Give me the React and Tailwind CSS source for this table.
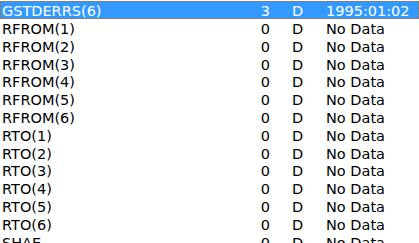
const rows = [
  { name: "GSTDERRS(5)", count: "3", flag: "D", value: "1995:01:02" },
  { name: "GSTDERRS(6)", count: "3", flag: "D", value: "1995:01:02", selected: true },
  { name: "RFROM(1)", count: "0", flag: "D", value: "No Data" },
  { name: "RFROM(2)", count: "0", flag: "D", value: "No Data" },
  { name: "RFROM(3)", count: "0", flag: "D", value: "No Data" },
  { name: "RFROM(4)", count: "0", flag: "D", value: "No Data" },
  { name: "RFROM(5)", count: "0", flag: "D", value: "No Data" },
  { name: "RFROM(6)", count: "0", flag: "D", value: "No Data" },
  { name: "RTO(1)", count: "0", flag: "D", value: "No Data" },
  { name: "RTO(2)", count: "0", flag: "D", value: "No Data" },
  { name: "RTO(3)", count: "0", flag: "D", value: "No Data" },
  { name: "RTO(4)", count: "0", flag: "D", value: "No Data" },
  { name: "RTO(5)", count: "0", flag: "D", value: "No Data" },
  { name: "RTO(6)", count: "0", flag: "D", value: "No Data" },
  { name: "SHAE", count: "0", flag: "D", value: "No Data" },
  { name: "SHAE(2)", count: "0", flag: "D", value: "No Data" },
];

function Row({ row }) {
  return (
    <div
      className={`box-border flex h-[17.8px] whitespace-nowrap pt-[2px] leading-[15.8px] ${
        row.selected
          ? "border border-dotted border-[#cc6600] bg-[#3399ff] text-white"
          : "border border-transparent text-black"
      }`}
    >
      <span className="w-[258px] shrink-0 pl-[1px]">{row.name}</span>
      <span className="w-[11px] shrink-0 text-right">{row.count}</span>
      <span className="ml-[22px] w-[34px] shrink-0">{row.flag}</span>
      <span className="shrink-0">{row.value}</span>
    </div>
  );
}

export default function App() {
  return (
    <div className="h-[243px] w-[419px] overflow-hidden bg-white font-['DejaVu_Sans',Verdana,sans-serif] text-[14.5px]">
      <div className="mt-[-16.6px]">
        {rows.map((row) => (
          <Row key={row.name} row={row} />
        ))}
      </div>
    </div>
  );
}
